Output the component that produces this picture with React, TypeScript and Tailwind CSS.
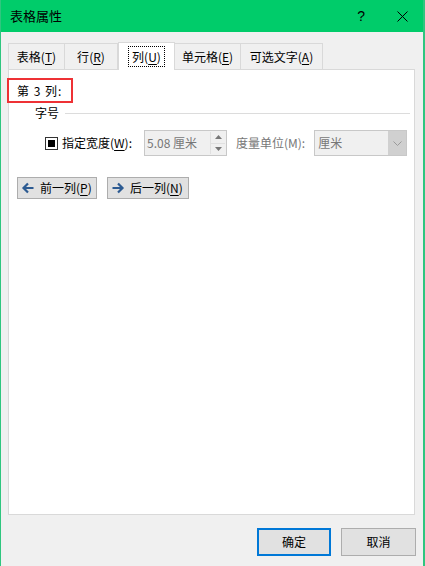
import React from "react";

const F = { fontFamily: '"Noto Sans CJK SC", "Noto Sans", sans-serif' };

function U({ c }: { c: string }) {
  return <span className="underline underline-offset-2">{c}</span>;
}

function Tab({ label, k, w, active }: { label: string; k: string; w: string; active?: boolean }) {
  if (active) {
    return (
      <div className={`${w} h-[28px] -mt-[1px] -mb-[1px] relative z-10 bg-white border border-b-0 border-[#d9d9d9] flex items-center justify-center`}>
        <div className="px-[3px] h-[21px] flex items-center border border-dotted border-black text-[12px] text-black">
          {label}(<U c={k} />)
        </div>
      </div>
    );
  }
  return (
    <div className={`${w} h-[26px] border border-b-0 border-l-0 first:border-l border-[#d9d9d9] flex items-center justify-center text-[12px] text-black`}>
      {label}(<U c={k} />)
    </div>
  );
}

export default function App() {
  return (
    <div style={F} className="w-[425px] h-[566px] flex flex-col bg-[#f0f0f0] border-l border-r-2 border-[#2fc67f] overflow-hidden">
      <div className="h-[32px] shrink-0 bg-[#00cc6a] flex items-center pl-[9px]">
        <span className="text-[13px] text-black">表格属性</span>
        <span className="ml-auto mr-[32px] text-[14px] text-black" style={{ fontFamily: '"Liberation Sans", sans-serif' }}>?</span>
        <svg className="mr-[15px]" width="11" height="11" viewBox="0 0 11 11">
          <path d="M0.5 0.5 L10.5 10.5 M10.5 0.5 L0.5 10.5" stroke="#000" strokeWidth="1" />
        </svg>
      </div>
      <div className="mt-[11px] pl-[7px] flex">
        <Tab label="表格" k="T" w="w-[57px]" />
        <Tab label="行" k="R" w="w-[53px]" />
        <Tab label="列" k="U" w="w-[57px]" active />
        <Tab label="单元格" k="E" w="w-[66px]" />
        <Tab label="可选文字" k="A" w="w-[82px]" />
      </div>
      <div className="ml-[7px] mr-[8px] h-[446px] bg-white border border-[#d9d9d9] flex flex-col">
        <div className="mt-[8px] ml-[-2px] w-[66px] h-[25px] border-2 border-[#ee3135] flex items-center pl-[8px] text-[12px] tracking-[1px] text-black">
          第 3 列:
        </div>
        <div className="mt-[1px] flex items-center pl-[26px] pr-[4px]">
          <span className="text-[12px] text-black">字号</span>
          <div className="ml-[6px] flex-1 h-px bg-[#dcdcdc]" />
        </div>
        <div className="mt-[8px] flex items-center h-[26px]">
          <div className="ml-[36px] w-[13px] h-[13px] border border-[#333] flex items-center justify-center">
            <div className="w-[7px] h-[7px] bg-black" />
          </div>
          <span className="ml-[4px] text-[12px] text-black">指定宽度(<U c="W" />):</span>
          <div className="ml-[12px] w-[83px] h-[26px] border border-[#c8c8c8] bg-[#f0f0f0] flex items-center">
            <span className="pl-[2px] text-[12px] text-[#777]">5.08 厘米</span>
            <div className="ml-auto mr-[1px] w-[15px] h-[22px] flex flex-col border-l border-[#e0e0e0]">
              <div className="flex-1 flex items-center justify-center border-b border-[#e0e0e0]">
                <svg width="7" height="4" viewBox="0 0 7 4"><path d="M0 4 L3.5 0 L7 4Z" fill="#777" /></svg>
              </div>
              <div className="flex-1 flex items-center justify-center">
                <svg width="7" height="4" viewBox="0 0 7 4"><path d="M0 0 L3.5 4 L7 0Z" fill="#777" /></svg>
              </div>
            </div>
          </div>
          <span className="ml-[9px] text-[12px] text-[#777]">度量单位(M):</span>
          <div className="ml-[9px] w-[93px] h-[26px] border border-[#c8c8c8] bg-[#f0f0f0] flex items-center">
            <span className="pl-[3px] text-[12px] text-[#777]">厘米</span>
            <div className="ml-auto w-[18px] h-full bg-[#d0d0d0] flex items-center justify-center">
              <svg width="9" height="5" viewBox="0 0 9 5"><path d="M0.5 0.5 L4.5 4.5 L8.5 0.5" stroke="#9a9a9a" fill="none" /></svg>
            </div>
          </div>
        </div>
        <div className="mt-[21px] ml-[8px] flex gap-[10px]">
          <div className="w-[80px] h-[22px] bg-[#e1e1e1] border border-[#adadad] flex items-center pl-[3px] text-[12px] text-black">
            <svg width="14" height="12" viewBox="0 0 14 12" className="mr-[5px]">
              <path d="M7 1.5 L2.5 6 L7 10.5 M2.5 6 L12.5 6" stroke="#2d5b92" strokeWidth="2.2" fill="none" />
            </svg>
            前一列(<U c="P" />)
          </div>
          <div className="w-[82px] h-[22px] bg-[#e1e1e1] border border-[#adadad] flex items-center pl-[3px] text-[12px] text-black">
            <svg width="14" height="12" viewBox="0 0 14 12" className="mr-[5px]">
              <path d="M7 1.5 L11.5 6 L7 10.5 M11.5 6 L1.5 6" stroke="#2d5b92" strokeWidth="2.2" fill="none" />
            </svg>
            后一列(<U c="N" />)
          </div>
        </div>
      </div>
      <div className="mt-[13px] flex justify-end gap-[10px] pr-[7px]">
        <div className="w-[74px] h-[28px] bg-[#e1e1e1] border-2 border-[#0078d7] flex items-center justify-center text-[12px] text-black">确定</div>
        <div className="w-[75px] h-[28px] bg-[#e1e1e1] border border-[#adadad] flex items-center justify-center text-[12px] text-black">取消</div>
      </div>
    </div>
  );
}
